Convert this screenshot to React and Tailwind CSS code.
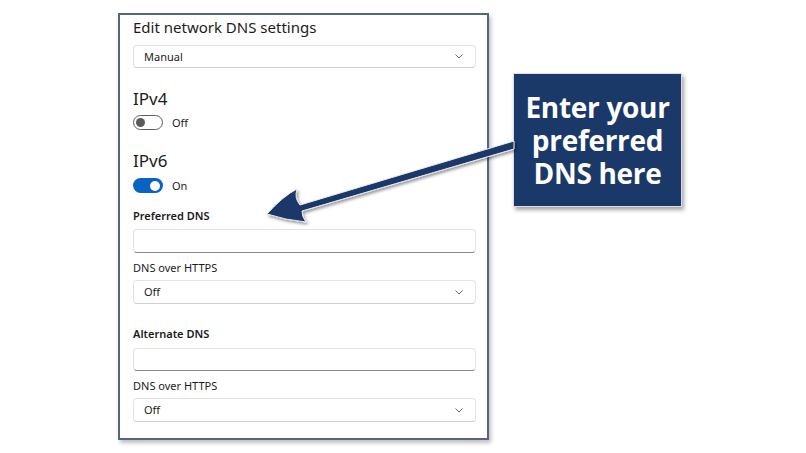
import React from 'react';

const Chevron = () => (
  <svg width="8" height="5" viewBox="0 0 8 5" className="text-[#6b6b6b]">
    <polyline points="0.5,0.5 4,4 7.5,0.5" fill="none" stroke="currentColor" strokeWidth="1" />
  </svg>
);

const Dropdown = ({ value, height = 'h-[24px]', className = '' }) => (
  <div
    className={`flex items-center justify-between ${height} pl-[10px] pr-[12px] bg-white border border-[#e3e3e3] border-b-[#cfcfcf] rounded-[4px] ${className}`}
  >
    <span className="text-[11px] leading-[14px] text-[#1b1b1b]">{value}</span>
    <Chevron />
  </div>
);

const TextField = ({ height = 'h-[24px]', className = '' }) => (
  <div
    className={`${height} bg-white border border-[#e3e3e3] border-b-[#8a8a8a] rounded-[4px] ${className}`}
  />
);

const Toggle = ({ on, label, className = '' }) => (
  <div className={`flex items-center h-[15px] gap-[9px] ${className}`}>
    {on ? (
      <div className="w-[30px] h-[15px] rounded-full bg-[#0a63c4] flex items-center justify-end pr-[3px]">
        <div className="w-[10px] h-[10px] rounded-full bg-white" />
      </div>
    ) : (
      <div className="w-[30px] h-[15px] rounded-full bg-white border border-[#5e5e5e] flex items-center pl-[2px]">
        <div className="w-[9px] h-[9px] rounded-full bg-[#5a5a5a]" />
      </div>
    )}
    <span className="text-[11px] leading-[15px] text-[#1b1b1b]">{label}</span>
  </div>
);

export default function App() {
  return (
    <div
      className="relative w-[806px] h-[453px] bg-white overflow-hidden"
      style={{ fontFamily: '"Noto Sans", "Open Sans", sans-serif' }}
    >
      <div className="flex items-start pl-[118px] pt-[13px]">
        {/* Settings panel */}
        <div className="w-[371px] h-[427px] border-2 border-[#56657d] bg-white shadow-[2px_3px_4px_rgba(0,0,0,0.25)] pl-[13px] pr-[11px] pt-[2px] flex flex-col">
          <div className="text-[15px] leading-[20px] text-[#1b1b1b]">Edit network DNS settings</div>
          <Dropdown value="Manual" height="h-[23px]" className="mt-[8px]" />

          <div className="mt-[19px] text-[17px] leading-[24px] text-[#1b1b1b]">IPv4</div>
          <Toggle on={false} label="Off" className="mt-[4px]" />

          <div className="mt-[19px] text-[17px] leading-[24px] text-[#1b1b1b]">IPv6</div>
          <Toggle on label="On" className="mt-[5px]" />

          <div className="mt-[15px] text-[11px] leading-[16px] font-semibold text-[#1b1b1b]">Preferred DNS</div>
          <TextField className="mt-[5px]" />

          <div className="mt-[7px] text-[11px] leading-[16px] text-[#1b1b1b]">DNS over HTTPS</div>
          <Dropdown value="Off" className="mt-[4px]" />

          <div className="mt-[22px] text-[11px] leading-[16px] font-semibold text-[#1b1b1b]">Alternate DNS</div>
          <TextField height="h-[23px]" className="mt-[6px]" />

          <div className="mt-[7px] text-[11px] leading-[16px] text-[#1b1b1b]">DNS over HTTPS</div>
          <Dropdown value="Off" className="mt-[4px]" />
        </div>

        {/* Callout */}
        <div
          className="ml-[24px] mt-[60px] w-[169px] h-[134px] bg-[#1a3968] border border-[#d8dde6] shadow-[2px_3px_4px_rgba(0,0,0,0.35)] flex items-center justify-center text-center text-white font-bold text-[28px] leading-[33px] tracking-[-0.3px]"
          style={{ fontFamily: '"Open Sans", "Noto Sans", sans-serif' }}
        >
          <div>
            Enter your
            <br />
            preferred
            <br />
            DNS here
          </div>
        </div>
      </div>

      {/* Arrow pointing to preferred DNS */}
      <svg className="absolute left-0 top-0 pointer-events-none" width="806" height="453" viewBox="0 0 806 453">
        <defs>
          <filter id="sh" x="-10%" y="-10%" width="130%" height="140%">
            <feDropShadow dx="1.5" dy="2" stdDeviation="1.5" floodColor="#000" floodOpacity="0.4" />
          </filter>
        </defs>
        <path
          d="M267 214 Q283 196 297 189 Q294 198 300 205 L514 141 L514 149 L302 211 Q302 217 306 222 Q285 220 267 214 Z"
          fill="#1a3968"
          stroke="#e8ecf2"
          strokeWidth="1"
          strokeLinejoin="round"
          filter="url(#sh)"
        />
      </svg>
    </div>
  );
}
